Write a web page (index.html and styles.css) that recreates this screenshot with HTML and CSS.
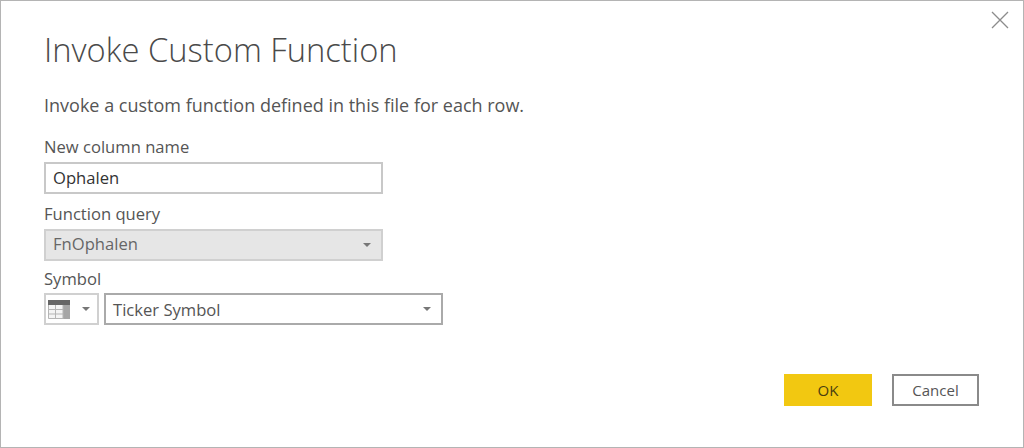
FILE: index.html
```html
<!DOCTYPE html>
<html lang="en">
<head>
<meta charset="UTF-8">
<title>Invoke Custom Function</title>
<link rel="stylesheet" href="styles.css">
</head>
<body>
<div class="dialog">
<button class="close" aria-label="Close">
<svg width="18" height="18" viewBox="0 0 18 18"><path d="M1 1 L17 17 M17 1 L1 17" stroke="#8c8c8c" stroke-width="1.3" fill="none"/></svg>
</button>
<h1>Invoke Custom Function</h1>
<p class="intro">Invoke a custom function defined in this file for each row.</p>

<div class="label first">New column name</div>
<div class="field">Ophalen</div>

<div class="label">Function query</div>
<div class="field disabled">FnOphalen<span class="arrow"></span></div>

<div class="label symbol">Symbol</div>
<div class="symbol-row">
<div class="type-btn">
<svg width="22" height="19" viewBox="0 0 22 19">
<rect x="0" y="0" width="22" height="19" fill="#f4f4f4"/>
<rect x="0" y="0" width="22" height="5" fill="#666"/>
<rect x="15" y="5" width="7" height="14" fill="#a6a6a6"/>
<path d="M0.5 5 V18.5 H15 M7.5 5 V19 M15 5 V19 M0 9.5 H15 M0 14 H15" stroke="#b5b5b5" stroke-width="1" fill="none"/>
</svg>
<span class="arrow small"></span>
</div>
<div class="field wide">Ticker Symbol<span class="arrow"></span></div>
</div>

<div class="actions">
<button class="btn ok">OK</button>
<button class="btn cancel">Cancel</button>
</div>
</div>
</body>
</html>
```

FILE: styles.css
```css
html, body {
    margin: 0;
    padding: 0;
}
body {
    width: 1024px;
    height: 448px;
    overflow: hidden;
    background: #fff;
    font-family: "Open Sans", "Liberation Sans", sans-serif;
    color: #555;
}
.dialog {
    box-sizing: border-box;
    width: 1024px;
    height: 448px;
    border: 1px solid #b4b4b4;
    padding: 27px 43px 0;
    position: relative;
}
.close {
    position: absolute;
    top: 10px;
    right: 14px;
    padding: 0;
    border: none;
    background: none;
    line-height: 0;
}
h1 {
    margin: 0;
    font-size: 32.7px;
    font-weight: 300;
    line-height: 44px;
    color: #4a4a4a;
}
.intro {
    margin: 21px 0 0;
    font-size: 18px;
    line-height: 24px;
}
.label {
    font-size: 16.6px;
    line-height: 20px;
    color: #555;
}
.label.first {
    margin-top: 20px;
}
.label + .field {
    margin-top: 5px;
}
.field {
    box-sizing: border-box;
    width: 339px;
    height: 32px;
    margin-bottom: 10px;
    border: 2px solid #c8c8c8;
    padding: 0 7px;
    font-size: 16.6px;
    line-height: 28px;
    color: #333;
    position: relative;
}
.field.disabled {
    background: #e6e6e6;
    border-color: #d0d0d0;
    color: #666;
    line-height: 26px;
}
.label.symbol {
    margin-top: -2px;
}
.symbol-row {
    display: flex;
    gap: 5px;
    margin-top: 4px;
}
.type-btn {
    box-sizing: border-box;
    width: 55px;
    height: 32px;
    border: 2px solid #d0d0d0;
    display: flex;
    align-items: center;
    padding-left: 2px;
    gap: 12px;
}
.field.wide {
    margin: 0;
    border-color: #aaa;
    color: #555;
    line-height: 30px;
}
.arrow {
    position: absolute;
    right: 10px;
    top: 12px;
    width: 0;
    height: 0;
    border-left: 4.5px solid transparent;
    border-right: 4.5px solid transparent;
    border-top: 4px solid #777;
}
.arrow.small {
    position: static;
}
.actions {
    position: absolute;
    right: 44px;
    bottom: 41px;
    display: flex;
    gap: 20px;
}
.btn {
    box-sizing: border-box;
    width: 87px;
    height: 32px;
    padding: 0;
    font-family: inherit;
    font-size: 15px;
    background: #fff;
    color: #555;
    border: 2px solid #8a8a8a;
}
.btn.ok {
    width: 88px;
    background: #f2c811;
    border: none;
    color: #4a3f10;
}
```
